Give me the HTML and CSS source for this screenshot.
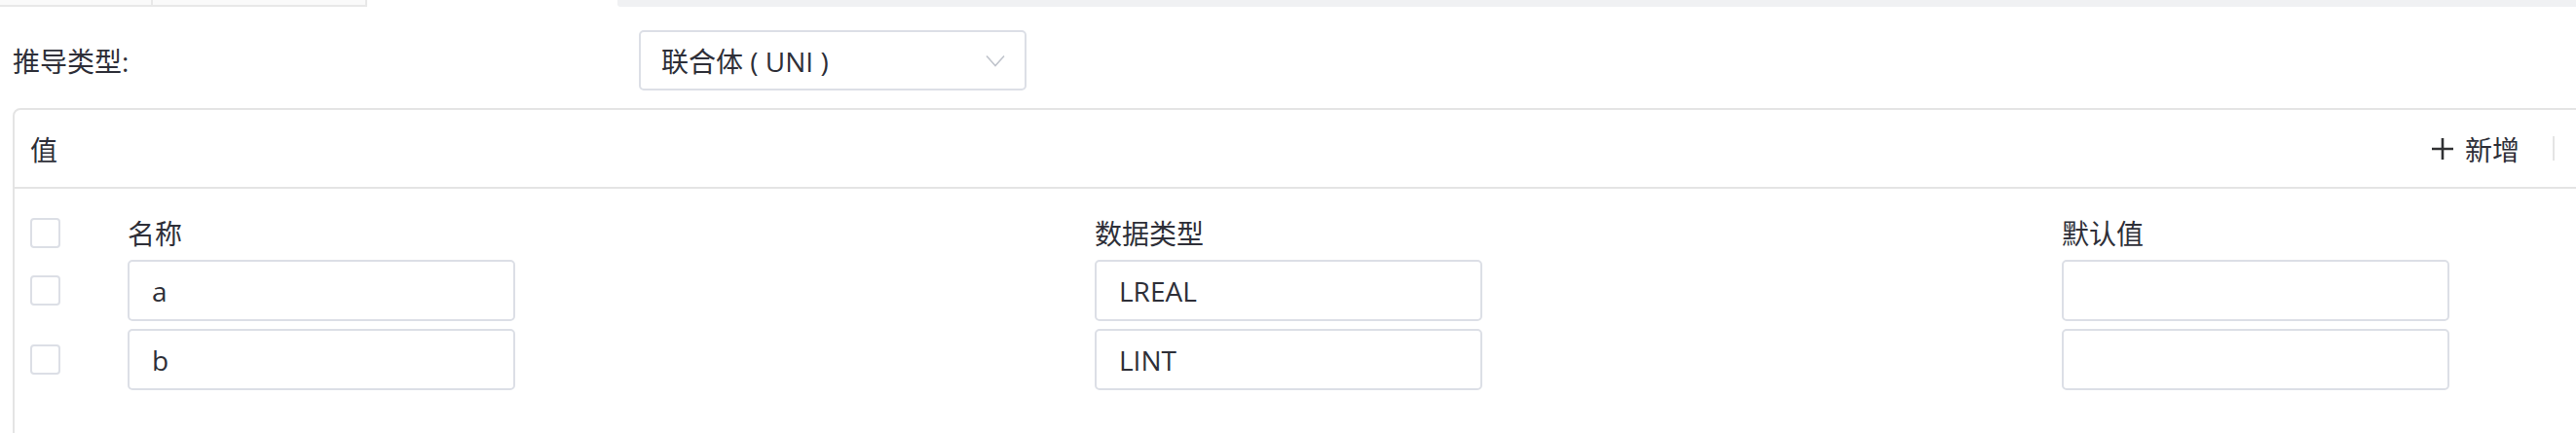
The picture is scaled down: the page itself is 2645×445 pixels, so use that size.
FILE: index.html
```html
<!DOCTYPE html>
<html lang="zh-CN">
<head>
  <meta charset="UTF-8" />
  <meta name="viewport" content="width=device-width, initial-scale=1.0" />
  <title>推导类型</title>
  <link rel="stylesheet" href="styles.css">
</head>
<body>
  <div class="tabs">
    <div class="tab tab-first"></div>
    <div class="tab tab-second"></div>
    <div class="tab tab-active"></div>
    <div class="tab-rest"></div>
  </div>

  <div class="form-row">
    <label class="form-label">推导类型:</label>
    <div class="select">
      <span>联合体 ( UNI )</span>
      <svg class="chevron" width="20" height="13" viewBox="0 0 20 13">
        <path d="M1 1.5 L10 11.5 L19 1.5" fill="none" stroke="#c0c4cc" stroke-width="1.6" />
      </svg>
    </div>
  </div>

  <div class="card">
    <div class="card-head">
      <span class="card-title">值</span>
      <div class="actions">
        <button class="btn-add">
          <svg width="22" height="22" viewBox="0 0 22 22">
            <path d="M11 0 V22 M0 11 H22" stroke="#303133" stroke-width="2.6" />
          </svg>
          新增
        </button>
        <span class="divider"></span>
      </div>
    </div>

    <div class="list">
      <div class="row row-head">
        <span class="checkbox"></span>
        <span class="cell">名称</span>
        <span class="cell">数据类型</span>
        <span class="cell">默认值</span>
      </div>
      <div class="row">
        <span class="checkbox"></span>
        <div class="cell"><div class="input">a</div></div>
        <div class="cell"><div class="input">LREAL</div></div>
        <div class="cell"><div class="input"></div></div>
      </div>
      <div class="row">
        <span class="checkbox"></span>
        <div class="cell"><div class="input">b</div></div>
        <div class="cell"><div class="input">LINT</div></div>
        <div class="cell"><div class="input"></div></div>
      </div>
    </div>
  </div>
</body>
</html>
```

FILE: styles.css
```css
body {
  margin: 0;
  font-family: "Open Sans", "Noto Sans CJK SC", sans-serif;
  font-size: 28px;
  color: #2e2f38;
  background-color: #fff;
  overflow: hidden;
}
.tabs {
  display: flex;
  height: 7px;
}
.tab {
  height: 5px;
  background-color: #fafafa;
  border-bottom: 2px solid #e8e8e8;
}
.tab-first {
  width: 155px;
  border-right: 2px solid #e8e8e8;
}
.tab-second {
  width: 218px;
  border-right: 2px solid #e8e8e8;
}
.tab-active {
  width: 257px;
  background-color: #fff;
  border-bottom: none;
}
.tab-rest {
  flex: 1;
  background-color: #f0f1f3;
  border-bottom-left-radius: 3px;
}
.form-row {
  display: flex;
  align-items: center;
  padding-left: 13px;
  margin-top: 24px;
}
.form-label {
  width: 643px;
}
.select {
  display: flex;
  align-items: center;
  justify-content: space-between;
  box-sizing: border-box;
  width: 398px;
  height: 62px;
  padding: 0 20px 0 21px;
  border: 2px solid #dcdfe6;
  border-radius: 5px;
}
.chevron {
  display: block;
}
.card {
  margin: 18px 0 0 13px;
  width: 2720px;
  height: 400px;
  border: 2px solid #e4e4e4;
  border-radius: 8px;
}
.card-head {
  display: flex;
  align-items: center;
  justify-content: space-between;
  height: 79px;
  padding-left: 16px;
  border-bottom: 2px solid #e4e4e4;
}
.actions {
  display: flex;
  align-items: center;
  padding-right: 112px;
}
.btn-add {
  display: flex;
  align-items: center;
  gap: 12px;
  padding: 0;
  border: none;
  background: none;
  font: inherit;
  color: inherit;
}
.divider {
  width: 2px;
  height: 25px;
  margin-left: 34px;
  background-color: #e4e4e4;
}
.list {
  padding: 25px 0 0 16px;
}
.row {
  display: grid;
  grid-template-columns: 100px 993px 993px 993px;
  align-items: center;
  margin-bottom: 8px;
}
.row-head {
  height: 32px;
  margin-bottom: 16px;
}
.checkbox {
  display: block;
  width: 31px;
  height: 31px;
  box-sizing: border-box;
  border: 2px solid #dcdfe6;
  border-radius: 4px;
}
.input {
  display: flex;
  align-items: center;
  box-sizing: border-box;
  width: 398px;
  height: 63px;
  padding-left: 23px;
  border: 2px solid #dcdfe6;
  border-radius: 5px;
}
```
